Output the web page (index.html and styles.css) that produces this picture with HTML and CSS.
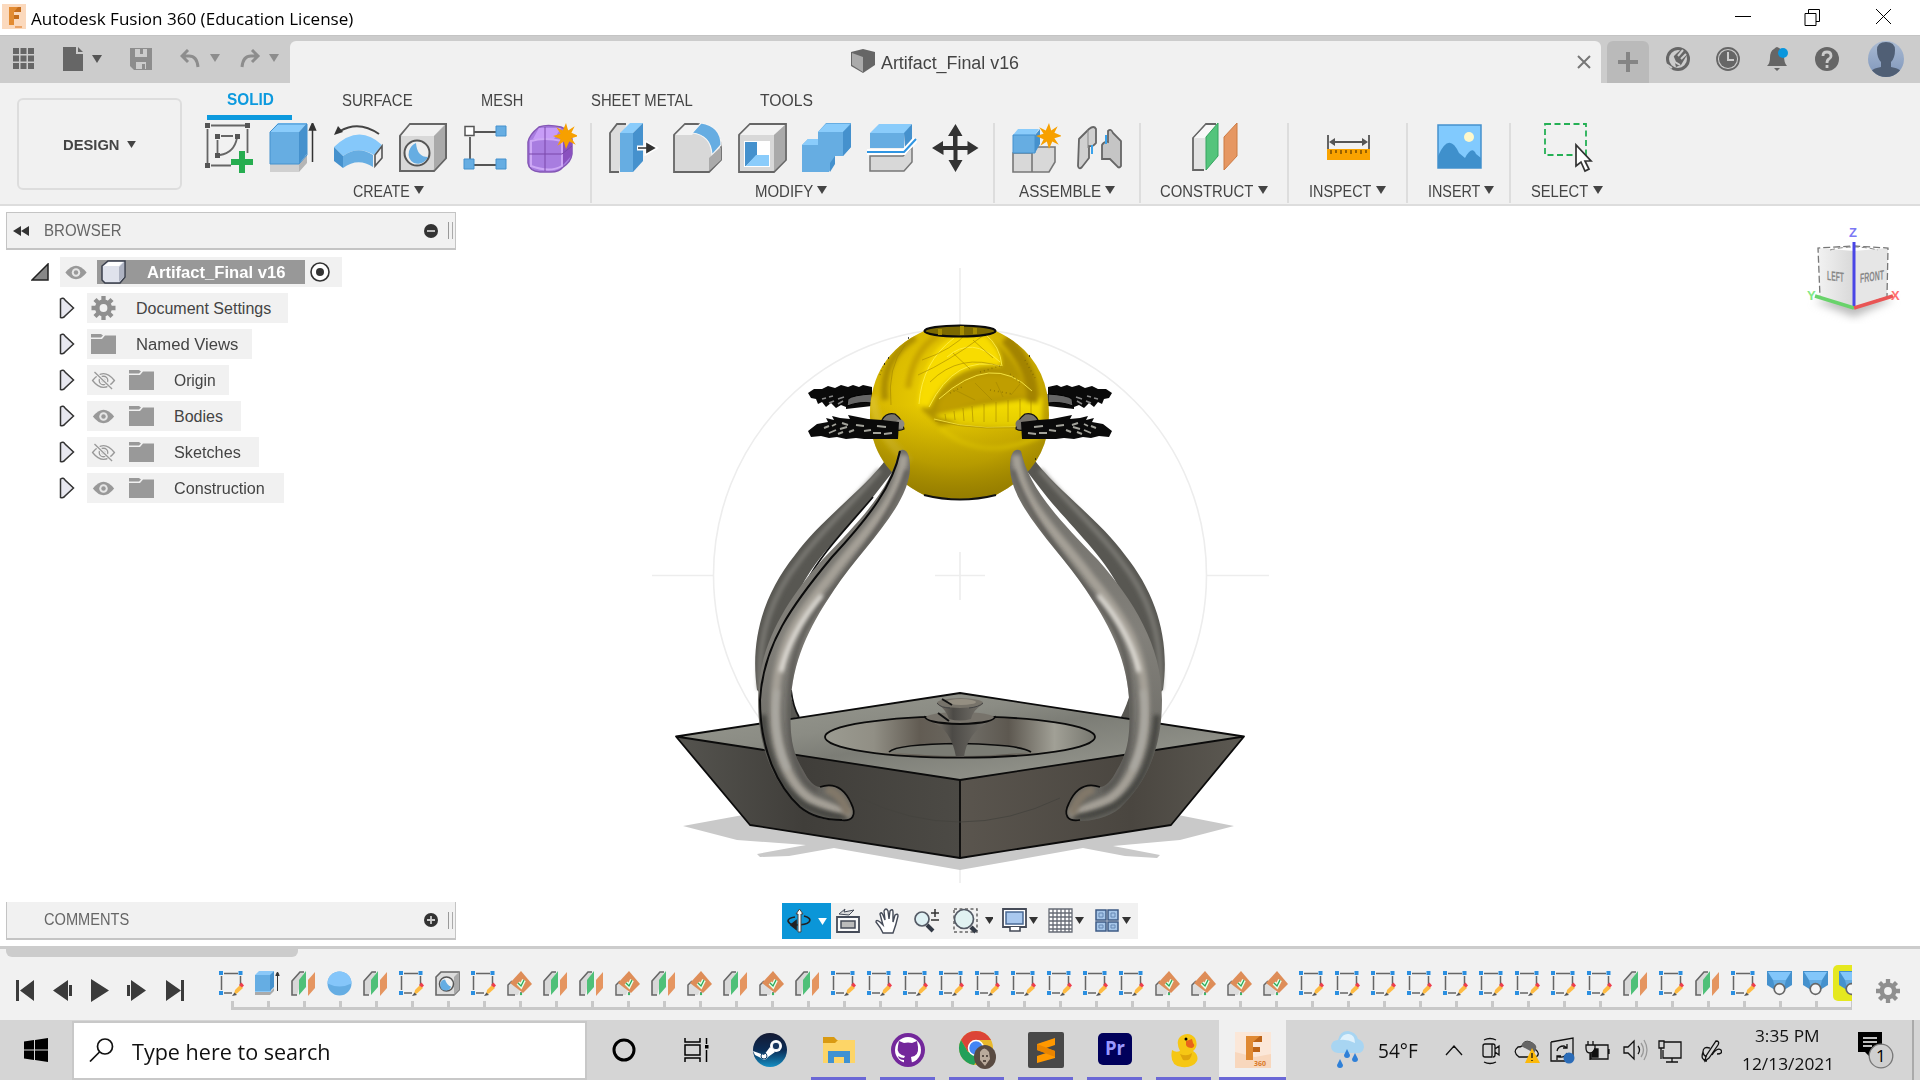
FILE: index.html
```html
<!DOCTYPE html>
<html lang="en">
<head>
<meta charset="utf-8">
<title>Autodesk Fusion 360 (Education License)</title>
<link rel="stylesheet" href="styles.css">
</head>
<body>
<svg class="defs" width="0" height="0">
  <symbol id="sketch" viewBox="0 0 25 25"><path d="M5 2.500h14M2.500 5v14M21.500 5v10M5 22h8" stroke="#666" stroke-width="1.500" fill="none"/><path d="M0 0h4v4H0zM19.500 0h4v4h-4zM0 20h4v4H0z" fill="#2b8fe0"/><path d="M15 24l1-5 5-5 3 3-5.500 5z" fill="#fdbb43"/><path d="M20 14l2.500-2.500 2.500 3-2 2z" fill="#ee3e4d"/><path d="M13 25l2.500-3.500L18 24z" fill="#555"/></symbol>
  <symbol id="extrude" viewBox="0 0 25 25"><path d="M0 21h15l4-4v3l-4 4H0z" fill="#aaa"/><path d="M0 4l4-4h15l-3 4v17H0z" fill="#8ac8f8"/><path d="M0 4h15v16H0z" fill="#65ade3"/><path d="M15 4l4-4v16l-4 4z" fill="#4591cd"/><path d="M22.500 20V3M20.800 4.500L22.500 1l1.700 3.500z" stroke="#333" fill="#333"/></symbol>
  <symbol id="plane" viewBox="0 0 25 25"><path d="M6 24H1V10L9 1h4" fill="#d8d8d8" stroke="#666" stroke-width="1.600"/><path d="M8 9l7-9v16l-7 8z" fill="#4fc078"/><path d="M17 9l7-8v16l-7 8z" fill="#e59560"/></symbol>
  <symbol id="ball" viewBox="0 0 25 25"><circle cx="12.500" cy="12.500" r="12" fill="#65ade3"/><path d="M.5 12.500a12 12 0 0 1 24 0q-12 6-24 0z" fill="#85c6fa"/></symbol>
  <symbol id="hole" viewBox="0 0 25 25"><path d="M1 6l5-5h18v18l-5 5H1z" fill="#ddd" stroke="#666" stroke-width="1.600"/><path d="M19 6l5-5v18l-5 5z" fill="#aaa"/><circle cx="11.500" cy="13" r="7" fill="#f2f2f2" stroke="#555" stroke-width="1.500"/><path d="M10 8.500q2 6 6 7A5.500 5.500 0 1 1 10 8.500z" fill="#65ade3"/></symbol>
  <symbol id="offset" viewBox="0 0 25 25"><path d="M2 24V13l5-4 6 10-2 5z" fill="#ddd"/><path d="M8 24H1V14l4-4M14 24v-3" fill="none" stroke="#666" stroke-width="1.500"/><path d="M14 0l11 13-9 9L3 12z" fill="#de8d58"/><path d="M11 12l3 3 3-6" fill="none" stroke="#e8ffe8" stroke-width="4"/><path d="M11 12l3 3 3-6" fill="none" stroke="#2aa85a" stroke-width="1.300"/><circle cx="14" cy="23" r="1.200" fill="#3dba67"/></symbol>
  <symbol id="sweep" viewBox="0 0 25 25"><path d="M0 0h25v14l-8 5H8l-8-5z" fill="#4591cd"/><path d="M1 1h23l-5 8H6z" fill="#82c6fa"/><path d="M6 9h13l-2 8H8z" fill="#65ade3"/><circle cx="12.500" cy="18" r="5.300" fill="#f5f5f5" stroke="#666" stroke-width="1.700"/></symbol>
  <symbol id="gear" viewBox="-12 -12 24 24"><circle r="6.200" fill="none" stroke="#8f8f8f" stroke-width="4.600"/><path d="M0-12V-7M0 12V7M-12 0H-7M12 0H7M-8.500-8.500l4 4M8.500 8.500l-4-4M-8.500 8.500l4-4M8.500-8.500l-4 4" stroke="#8f8f8f" stroke-width="4.300"/></symbol>
  <symbol id="eye" viewBox="0 0 25 20"><path d="M0 10Q12.500-6 25 10 12.500 26 0 10z" fill="#999"/><circle cx="12.500" cy="10" r="5" fill="#e6e6e6"/><circle cx="12.500" cy="10" r="2.600" fill="#999"/></symbol>
  <symbol id="eyeoff" viewBox="0 0 25 20"><path d="M1 10Q12.500-4.500 24 10 12.500 24.500 1 10zM8 10a4.500 4.500 0 1 0 9 0a4.500 4.500 0 1 0-9 0M11 10a1.500 1.500 0 1 0 3 0a1.500 1.500 0 1 0-3 0" fill="none" stroke="#999" stroke-width="1.400"/><path d="M3 1l19 18" stroke="#f1f1f1" stroke-width="3.500"/><path d="M3 1l18.500 18" stroke="#999" stroke-width="1.400"/></symbol>
  <symbol id="folder" viewBox="0 0 25 20"><path d="M0 0h10l2 1.500-2 2H0zM0 5h11l3-3.500h11V20H0z" fill="#999"/></symbol>
  <symbol id="arrow" viewBox="0 0 16 22"><path d="M1.500 2q3-2 4.500 1l8.500 8L6 19q-1.500 2.500-4.500 1.500z" fill="#e8e8f0" stroke="#333" stroke-width="1.500"/></symbol>
  <symbol id="star" viewBox="-12 -12 24 24"><path d="M0-12l2 7 6-4-3 6 7 3-7 2 4 6-6-3-3 7-2-7-6 4 3-6-7-3 7-2-4-6 6 3z" fill="#f7a000"/></symbol>
  <symbol id="down" viewBox="0 0 10 8"><path d="M0 0h10L5 8z" fill="currentColor"/></symbol>
</svg>

<header class="titlebar">
  <svg class="app-mark" width="24" height="25" viewBox="0 0 24 25"><path d="M0 0h24v25H0z" fill="#fbd9bd"/><path d="M7 3h12v5h-7v3h5v4h-5v6H7z" fill="#c56d1c"/><path d="M7 3h9l-4 5v13H7z" fill="#e28b32"/><path d="M13 22h7v2h-7z" fill="#eaa468"/></svg>
  <span class="title" data-w="322">Autodesk Fusion 360 (Education License)</span>
  <svg class="winctl" width="162" height="20" viewBox="0 0 162 20" fill="none" stroke="#000"><path d="M0 8.500h16M70 5.500h11v12H70zM73.500 5V1.500h11v12H81M141 1l15 15M156 1l-15 15"/></svg>
</header>

<nav class="tabbar">
  <div class="quick">
    <svg width="22" height="22" viewBox="0 0 22 22"><path d="M0 0h6v6H0zM7.500 0h6v6h-6zM15 0h6v6h-6zM0 7.500h6v6H0zM7.500 7.500h6v6h-6zM15 7.500h6v6h-6zM0 15h6v6H0zM7.500 15h6v6h-6zM15 15h6v6h-6z" fill="#666"/></svg>
    <svg class="q-file" width="40" height="25" viewBox="0 0 40 25"><path d="M0 0h13v7h7v17H0zM15 0l5 5h-5z" fill="#666"/><path d="M29 8h10l-5 8z" fill="#555"/></svg>
    <svg class="q-save" width="22" height="22" viewBox="0 0 22 22"><path d="M0 0h22v22H4l-4-4z" fill="#8d8d8d"/><path d="M5 1h12v8H5zM6 14h10v7H6z" fill="#ccc"/><path d="M10 1h3v5h-3zM12 16h3v5h-3z" fill="#8d8d8d"/></svg>
    <svg class="q-undo" width="40" height="20" viewBox="0 0 40 20"><path d="M8 1L2 7l6 6M2 7h7q8 0 9 11" fill="none" stroke="#8d8d8d" stroke-width="3"/><path d="M30 5h10l-5 8z" fill="#8d8d8d"/></svg>
    <svg class="q-redo" width="40" height="20" viewBox="0 0 40 20"><path d="M12 1l6 6-6 6M18 7h-7Q3 7 2 18" fill="none" stroke="#8d8d8d" stroke-width="3"/><path d="M29 5h10l-5 8z" fill="#8d8d8d"/></svg>
  </div>
  <div class="doctab">
    <svg width="24" height="24" viewBox="0 0 24 24"><path d="M0 3L12 0l12 3v13l-12 8L0 17z" fill="#666"/><path d="M1 4l11 4v15L1 16z" fill="#aaa"/></svg>
    <span data-w="138">Artifact_Final v16</span>
    <svg class="close" width="14" height="14" viewBox="0 0 14 14"><path d="M1 1l12 12M13 1L1 13" stroke="#777" stroke-width="2"/></svg>
  </div>
  <div class="newtab"><svg width="20" height="20" viewBox="0 0 20 20"><path d="M8 0h4v8h8v4h-8v8H8v-8H0V8h8z" fill="#858585"/></svg></div>
  <div class="status">
    <svg width="24" height="24" viewBox="0 0 24 24"><circle cx="12" cy="12" r="10.500" fill="none" stroke="#666" stroke-width="3"/><path d="M9 16l-2-6 4-4 5-4 2 2 3 4-3 5-3 5-5 2z" fill="#666"/><path d="M12 9l5-6M15 12l5-5M6 8l3 7 5 3" stroke="#ccc" stroke-width="2" fill="none"/><path d="M0 17l6 4" stroke="#ccc" stroke-width="2"/></svg>
    <svg width="24" height="24" viewBox="0 0 24 24"><circle cx="12" cy="12" r="11" fill="none" stroke="#666" stroke-width="1.800"/><circle cx="12" cy="12" r="9" fill="#666"/><path d="M12 5v8h6" fill="none" stroke="#ccc" stroke-width="2"/></svg>
    <svg width="24" height="24" viewBox="0 0 24 24"><path d="M2 19q3-3 3-8 0-7 4-9 2-2 3-2 6 2 7 9 0 7 3 10zM9 21h6l-3 3z" fill="#666"/><circle cx="18" cy="6" r="5" fill="#0a96dd"/></svg>
    <svg width="24" height="24" viewBox="0 0 24 24"><circle cx="12" cy="12" r="12" fill="#666"/><path d="M8 9q0-4 4-4t4 4q0 2-2 3t-2 4M12 18v3" fill="none" stroke="#ccc" stroke-width="2.800"/></svg>
    <svg class="avatar" width="36" height="36" viewBox="0 0 36 36"><defs><linearGradient id="av" x2="0" y2="1"><stop stop-color="#a9bad2"/><stop offset="1" stop-color="#7f96bb"/></linearGradient><clipPath id="avc"><circle cx="18" cy="18" r="18"/></clipPath></defs><circle cx="18" cy="18" r="18" fill="url(#av)"/><path clip-path="url(#avc)" d="M9 9q0-8 9-8t9 8q0 8-4 12v5q7 1 10 4v6H3v-6q3-3 10-4v-5Q9 17 9 9z" fill="#505f75"/></svg>
  </div>
</nav>

<section class="ribbon">
  <button class="design"><span data-w="57">DESIGN</span><svg width="9" height="7"><use href="#down"/></svg></button>
  <div class="tools">
    <div class="modes">
      <span class="mode on"><b data-w="47">SOLID</b></span><span class="mode m2" data-w="71">SURFACE</span><span class="mode m3" data-w="42">MESH</span><span class="mode m4" data-w="102">SHEET METAL</span><span class="mode m5" data-w="53">TOOLS</span>
    </div>
    <div class="groups">
      <div class="group g-create">
        <div class="icons">
          <svg viewBox="0 0 50 50"><path d="M6 2.500h34M2.500 6v34M42.500 6v24M6 42.500h20M16 13h12M12.500 17v14M32 15q-3 15-17 17" fill="none" stroke="#666" stroke-width="1.800"/><path d="M0 0h5v5H0zM40 0h5v5h-5zM0 40h5v5H0zM10 11h5v5h-5zM30 11h5v5h-5zM10 30h5v5h-5z" fill="#555"/><path d="M34 28h6v8h8v6h-8v8h-6v-8h-8v-6h8z" fill="#26ad50"/></svg>
          <svg viewBox="0 0 50 50"><path d="M1 41h29l8-9v8l-8 9H1z" fill="#b5b5b5"/><path d="M1 41h29v8H1z" fill="#d0d0d0"/><path d="M1 9l8-9h29l-8 9z" fill="#8accfb"/><path d="M1 9h29v32H1z" fill="#66ade2"/><path d="M30 9l8-9v31l-8 10z" fill="#4591cd"/><path d="M1 9v32h29l8-9V1H9z" fill="none" stroke="#4591cd"/><path d="M43.500 39V5M40.500 7L43.500 0l3 7z" fill="#333" stroke="#333" stroke-width="1.500"/></svg>
          <svg viewBox="0 0 50 50"><path d="M6 8Q25-3 45 11" fill="none" stroke="#444" stroke-width="2"/><path d="M0 12l4-9 5 6z" fill="#333"/><path d="M0 24Q25 0 48 22l-8 10Q24 22 9 33z" fill="#85c8fa"/><path d="M0 24l9 9v12L0 38z" fill="#4591cd"/><path d="M9 33q15-11 30-1v12q-15-10-30 1z" fill="#66ade2"/><path d="M41 32l7-9v12l-7 8z" fill="#eee" stroke="#555" stroke-width="1.600"/></svg>
          <svg viewBox="0 0 50 50"><path d="M2 13L12 1h36v34L36 48H2z" fill="#d8d8d8" stroke="#666" stroke-width="2"/><path d="M3 13L12 2h34L36 13z" fill="#f0f0f0"/><path d="M36 13L47 2v33L36 47z" fill="#aaa"/><circle cx="19" cy="30" r="12.500" fill="#eee" stroke="#555" stroke-width="2"/><path d="M18 20q1 14 12 14-5 9-14 6-7-4-5-12 2-6 7-8z" fill="#66ade2"/></svg>
          <svg viewBox="0 0 50 50"><path d="M10 9h24M7 14v22M10 42h24" stroke="#555" stroke-width="1.800"/><path d="M2 3.500h9v9H2z" fill="#fff" stroke="#555" stroke-width="1.500"/><path d="M33 3h10v10H33zM1 36h10v10H1zM33 36h10v10H33z" fill="#66ade2" stroke="#4591cd"/></svg>
          <svg viewBox="0 0 50 50"><path d="M1 19Q2 12 12 4q8-3 22 0 10 4 11 12v15q-1 8-9 13-4 5-12 5H13Q2 48 1 40z" fill="#a87de0" stroke="#8456b5" stroke-width="1.500"/><path d="M12 5h22l-7 11H6z" fill="#c79cf7"/><path d="M35 17l10 0v15l-9 10z" fill="#8a51bf"/><path d="M4 18q13-4 31 0v25q-12 7-31 0z" fill="none" stroke="#cda8f6" stroke-width="2"/><path d="M18 4v44M2 31h33l10-8" fill="none" stroke="#7a48aa" stroke-width="1"/><use href="#star" x="26" y="-1" width="26" height="28"/></svg>
        </div>
        <div class="glabel"><span data-w="57">CREATE</span><svg width="10" height="8"><use href="#down"/></svg></div>
      </div>
      <div class="group g-modify">
        <div class="icons">
          <svg viewBox="0 0 50 50"><path d="M10 49H1V10L8 1h9" fill="#ddd" stroke="#666" stroke-width="1.800"/><path d="M11 10l10-10h13L24 10z" fill="#8accfb"/><path d="M11 10h13v39H11z" fill="#66ade2"/><path d="M24 10L34 0v38L24 49z" fill="#4591cd"/><path d="M28 25h13M38 21l7 4-7 4z" stroke="#fff" stroke-width="5"/><path d="M29 25h12M38 21l7 4-7 4z" fill="#333" stroke="#333" stroke-width="1.700"/></svg>
          <svg viewBox="0 0 50 50"><path d="M1 12L12 1h12Q47 2 48 25v12L36 49H1z" fill="#d8d8d8" stroke="#666" stroke-width="1.800"/><path d="M2 12L12 2h16L19 12z" fill="#f3f3f3"/><path d="M19 10L28 0q20 3 20 22l-9 10Q38 12 19 10z" fill="#66ade2" stroke="#f5f5f5" stroke-width="1.200"/><path d="M36 35l12-11v13L36 48z" fill="#aaa"/></svg>
          <svg viewBox="0 0 50 50"><path d="M1 12L12 1h36v36L36 49H1z" fill="#d8d8d8" stroke="#666" stroke-width="1.800"/><path d="M2 12L12 2h35L36 12z" fill="#f2f2f2"/><path d="M36 12L47 2v35L36 48z" fill="#aaa"/><path d="M6 18h26v26H6z" fill="#fff"/><path d="M7 19h12v13L8 43H7z" fill="#4591cd"/><path d="M18 32h13v11H8z" fill="#8accfb"/></svg>
          <svg viewBox="0 0 50 50"><path d="M0 22l6-6h10V9l8-9h25v24l-8 9h-8v7l-6 9H0z" fill="#66ade2"/><path d="M16 9l8-8h24l-7 8zM0 22l6-6h10v6z" fill="#8accfb"/><path d="M41 9l8-8v23l-8 9zM28 40l5-7v8l-5 8z" fill="#4591cd"/></svg>
          <svg viewBox="0 0 50 50"><path d="M3 10L12 1h33l-7 9z" fill="#8accfb"/><path d="M3 10h34v15H3z" fill="#66ade2"/><path d="M37 10l8-9v15l-7 9z" fill="#4591cd"/><path d="M3 33h33l9-9v15l-8 9H3z" fill="#d8d8d8" stroke="#777" stroke-width="1.500"/><path d="M0 29h37L49 16" stroke="#fff" stroke-width="6" fill="none"/><path d="M0 29h37L49 16" stroke="#2f95e2" stroke-width="2" fill="none"/></svg>
          <svg viewBox="0 0 50 50"><path d="M24.500 1l7 12h-5v10h10v-5l11 7-11 7v-5h-10v10h5l-7 12-7-12h5V27h-10v5L1 25l11-7v5h10V13h-5z" fill="#333"/></svg>
        </div>
        <div class="glabel"><span data-w="58">MODIFY</span><svg width="10" height="8"><use href="#down"/></svg></div>
      </div>
      <div class="group g-assemble">
        <div class="icons">
          <svg viewBox="0 0 50 50"><path d="M2 30h19v19H2zM21 30l5-6h18v15l-6 10H21z" fill="#d8d8d8" stroke="#777" stroke-width="1.600"/><path d="M2 12l5-6h21l-4 6z" fill="#8accfb"/><path d="M2 12h22v18H2z" fill="#66ade2" stroke="#4591cd"/><path d="M24 12l5-6v15l-5 9z" fill="#4591cd"/><use href="#star" x="25" y="0" width="26" height="26"/></svg>
          <svg viewBox="0 0 50 50"><path d="M4 16L14 6q5-4 7 0v14q-3 4-7 3v12L7 44q-3 3-4-1z" fill="#d0d0d0" stroke="#666" stroke-width="1.800"/><path d="M13 7v18M41 15v22" stroke="#888"/><path d="M33 17V8q3-3 5 2l8 8v25q-2 3-4 0l-7-7h-8V22q2-4 6-3z" fill="#c5c5c5" stroke="#666" stroke-width="1.800"/><path d="M17 22v9M31 12v9" stroke="#3aa3ec" stroke-width="2"/></svg>
        </div>
        <div class="glabel"><span data-w="82">ASSEMBLE</span><svg width="10" height="8"><use href="#down"/></svg></div>
      </div>
      <div class="group g-construct">
        <div class="icons"><svg viewBox="0 0 50 50"><path d="M14 47H3V15L16 1h10" fill="#e3e3e3" stroke="#666" stroke-width="1.800"/><path d="M4 15L16 2h10L15 15z" fill="#f8f8f8"/><path d="M16 14L28 0v33L16 47z" fill="#54c47c" stroke="#35a45e"/><path d="M34 14L47 0v33L34 47z" fill="#e69762" stroke="#cc7a43"/></svg></div>
        <div class="glabel"><span data-w="93">CONSTRUCT</span><svg width="10" height="8"><use href="#down"/></svg></div>
      </div>
      <div class="group g-inspect">
        <div class="icons"><svg viewBox="0 0 50 50"><path d="M4 12v14M45 12v14M8 19h34" stroke="#555" stroke-width="1.800"/><path d="M5 19l6-4v8zM44 19l-6-4v8z" fill="#555"/><path d="M3 26h43v11H3z" fill="#f9a300"/><path d="M7 27v4M12 27v3M17 27v4M22 27v3M27 27v4M32 27v3M37 27v4M42 27v3" stroke="#7a4e00" stroke-width="1.500"/></svg></div>
        <div class="glabel"><span data-w="62">INSPECT</span><svg width="10" height="8"><use href="#down"/></svg></div>
      </div>
      <div class="group g-insert">
        <div class="icons"><svg viewBox="0 0 50 50"><path d="M3 2h43v43H3z" fill="#81cafe" stroke="#4591cd" stroke-width="1.500"/><circle cx="34" cy="14" r="5" fill="#fdf8cb"/><path d="M3 33q11-25 21-3l6 5q7-13 11-4l5 4v10H3z" fill="#3f90cc"/></svg></div>
        <div class="glabel"><span data-w="52">INSERT</span><svg width="10" height="8"><use href="#down"/></svg></div>
      </div>
      <div class="group g-select">
        <div class="icons"><svg viewBox="0 0 50 50"><path d="M1 1h41v31H1z" fill="none" stroke="#25b055" stroke-width="1.800" stroke-dasharray="6 3.500"/><path d="M32 22v21l5-4 4 9 4-2-4-8h6z" fill="#fff" stroke="#333" stroke-width="1.700"/></svg></div>
        <div class="glabel"><span data-w="57">SELECT</span><svg width="10" height="8"><use href="#down"/></svg></div>
      </div>
    </div>
  </div>
</section>

<main class="viewport">
  <svg class="scene" width="1920" height="740" viewBox="0 206 1920 740">
    <defs>
      <radialGradient id="gold" cx=".47" cy=".4" r=".62"><stop stop-color="#f3d700"/><stop offset=".6" stop-color="#d8b800"/><stop offset=".9" stop-color="#a98d00"/><stop offset="1" stop-color="#857008"/></radialGradient>
      <linearGradient id="goldlow" x2="0" y2="1"><stop offset=".45" stop-color="#a08800" stop-opacity="0"/><stop offset="1" stop-color="#8d7600" stop-opacity=".9"/></linearGradient>
      <linearGradient id="topface" x1="0" x2="1" y2="1"><stop stop-color="#9a9b92"/><stop offset=".35" stop-color="#8b8c84"/><stop offset=".5" stop-color="#7c7d76"/><stop offset="1" stop-color="#a0a198"/></linearGradient>
      <linearGradient id="lface"><stop stop-color="#55544f"/><stop offset=".45" stop-color="#403e3a"/><stop offset="1" stop-color="#4c4a45"/></linearGradient>
      <linearGradient id="rface"><stop stop-color="#5a554e"/><stop offset=".6" stop-color="#4a4640"/><stop offset="1" stop-color="#5c5952"/></linearGradient>
      <linearGradient id="pool"><stop stop-color="#9b9b91"/><stop offset=".18" stop-color="#918f85"/><stop offset=".35" stop-color="#625c53"/><stop offset=".55" stop-color="#6d6a63"/><stop offset=".68" stop-color="#5d5850"/><stop offset=".85" stop-color="#a1a096"/><stop offset="1" stop-color="#77776f"/></linearGradient>
      <linearGradient id="cup"><stop stop-color="#807a70"/><stop offset=".35" stop-color="#4c4a46"/><stop offset="1" stop-color="#77746d"/></linearGradient>
      <linearGradient id="cube"><stop stop-color="#f2f2f2"/><stop offset="1" stop-color="#d8d8d8"/></linearGradient>
      <linearGradient id="legg" x2="0" y2="1"><stop stop-color="#6f6d68"/><stop offset=".5" stop-color="#82807a"/><stop offset="1" stop-color="#62615c"/></linearGradient>
      <filter id="b2" x="-30%" y="-30%" width="160%" height="160%"><feGaussianBlur stdDeviation="2"/></filter>
      <filter id="b4" x="-30%" y="-30%" width="160%" height="160%"><feGaussianBlur stdDeviation="4"/></filter>
      <clipPath id="ballclip"><path d="M924 331Q870 356 870 415 870 468 924 495q36 8 72 0 53-27 53-80 0-59-53-84-36-11-72 0z"/></clipPath>
      <path id="frontleg" d="M899 451C892 485 866 515 822 560 787 600 758 645 758 700 758 752 776 785 800 808 812 818 828 821 842 821 853 822 856 812 851 803 845 790 835 782 820 787 814 787 808 780 803 770 789 748 790 725 791 698 794 654 814 620 834 590 860 550 909 507 910 468 910 450 904 448 899 451z"/>
      <clipPath id="legclip"><use href="#frontleg"/></clipPath>
      <g id="backleg"><path d="M887 458C866 488 820 520 795 555 763 595 750 640 757 690L790 719 799 717C785 690 775 640 800 590 813 560 850 525 873 497L894 470z" fill="#585752"/><path d="M880 470C855 500 822 530 800 560 772 595 757 635 760 690" fill="none" stroke="#807f79" stroke-width="4" filter="url(#b2)"/></g>
      <g id="leg"><use href="#frontleg" fill="url(#legg)"/><g clip-path="url(#legclip)" fill="none"><path d="M904 455C900 505 860 535 828 580 790 625 775 655 775 710 775 760 795 790 812 800L850 815" stroke="#a5a097" stroke-width="9" filter="url(#b2)"/><path d="M907 470C892 515 862 550 834 588 802 625 790 655 790 700 788 750 800 785 818 790" stroke="#4e4c48" stroke-width="3" filter="url(#b2)"/><path d="M822 595C800 620 786 648 781 672" stroke="#efece6" stroke-width="4" filter="url(#b2)"/><path d="M763 715q4 65 42 91 20 10 42 11" stroke="#45443f" stroke-width="6" filter="url(#b2)"/><path d="M777 690Q771 735 788 770" stroke="#aaa9a3" stroke-width="5" filter="url(#b2)"/><path d="M826 789q17 5 22 26" stroke="#827869" stroke-width="9" filter="url(#b2)"/></g><path d="M820 787C835 782 845 790 851 803 857 815 853 822 840 820" fill="none" stroke="#0a0a0a" stroke-width="1.700"/></g>
      <g id="wingback"><path d="M872 387l-9-2-4 2-6-2-5 2-7-2-6 3-7-2-6 3-8 0-6 4 3 5 5 1 2 5 4-2 4 5 5-4 5 5 5-3 5 2v2l26-3z" fill="#0a0a0a"/><path d="M872 394q-19 1-24 5l-1 7q13-5 25-3z" fill="#666" stroke="#000"/><path d="M822 399l4-1M829 397l4-1M829 403l5-2M838 399l6-2M838 404l5-3" stroke="#888" stroke-width="1.500"/></g>
      <g id="wingfront"><path d="M899 422l-17-2-14-1-20-4 2 4-10-1-8-2 2 4-8-2 2 4-11 2-9 7 3 6 10-1 8 2 8-1 9 2 10-1 8 1 13 0 21 0z" fill="#0a0a0a"/><path d="M824 428l5-2M832 426l4-2M829 433l7-3M840 429l7-2M842 423l6 2M838 434l5-2M849 432l5-2M856 425l8 1M864 431l7-1M877 426l9 1M873 433l8 0M884 434l8-1" stroke="#a3a39b" stroke-width="1.900"/></g>
    </defs>
    <g fill="none" stroke="#ededed" stroke-width="1.600"><circle cx="960" cy="575" r="246.500"/><path d="M960 268v61M960 822v61M652 575.500h61M1207 575.500h62M935 575.500h50M960 552v48"/></g>
    <path d="M683 826l60-11L960 840l218-25 56 11-54 14-67 6 47 9-3 3-32-2-42-8-123 22-126-22-45 8-29 1-3-3 49-9-69-5z" fill="#c9c9c9"/>
    <use href="#backleg"/><use href="#backleg" transform="matrix(-1 0 0 1 1920 0)"/>
    <path d="M873 497C845 530 820 555 806 583M791 690q2 17 8 27" fill="none" stroke="#111" stroke-width="1.800"/>
    <path d="M676 736.500L960 693l284 43.500L960 780z" fill="url(#topface)"/>
    <path d="M676 736.500L960 780v78L750 825z" fill="url(#lface)"/>
    <path d="M1244 736.500L960 780v78l211-33z" fill="url(#rface)"/>
    <path d="M676 736.500L960 693l284 43.500L960 780zM676 736.500L750 825l210 33 211-33 73-88.500M960 780v78" fill="none" stroke="#0b0b0b" stroke-width="1.800" stroke-linejoin="round"/>
    <path d="M860 798q100 48 200 0" fill="none" stroke="#44423d" stroke-width=".8"/>
    <ellipse cx="960" cy="737" rx="135" ry="20.700" fill="url(#pool)" stroke="#0b0b0b" stroke-width="1.800"/>
    <path d="M889 752q8-8 71-8.500 60 1 71 8.500-70 8-142 0z" fill="#7b7c74"/><path d="M889 752q8-8 71-8.500 60 1 71 8.500" fill="none" stroke="#0b0b0b" stroke-width="1.700"/>
    <path d="M932 722q19 7 24 35h8q3-24 26-36z" fill="url(#cup)"/>
    <ellipse cx="960" cy="718" rx="35" ry="6" fill="#77736b"/><path d="M925 716q-1 7 35 8 36-1 35-8" fill="none" stroke="#0b0b0b" stroke-width="1.800"/>
    <path d="M937 704q9 5 12 15 11 3 22 0 2-9 12-15z" fill="url(#cup)"/><path d="M938 713l11 8" stroke="#111" stroke-width="2"/>
    <ellipse cx="960" cy="703" rx="23" ry="5" fill="#77736a"/><ellipse cx="961" cy="702" rx="15" ry="3" fill="#958f82"/><path d="M942 699l10 6" stroke="#111" stroke-width="2"/><path d="M937 703q4 5 13 5M969 708q10-1 14-5" stroke="#444" fill="none"/>
    <use href="#wingback"/><use href="#wingback" transform="matrix(-1 0 0 1 1920 0)"/>
    <g clip-path="url(#ballclip)">
      <path d="M860 320h200v190H860z" fill="url(#gold)"/>
      <g filter="url(#b2)">
        <path d="M922 410Q925 345 970 331q50 15 60 75l-90 20z" fill="#b39400"/>
        <path d="M918 405Q922 350 955 336h30q18 14 16 30-50-5-72 42z" fill="#f8dc06"/>
        <path d="M940 400q35-42 95-15l5 12q-60-3-104 22z" fill="#c09e00"/>
        <path d="M934 416q40-11 108-18v26q-52 8-108-8z" fill="#f2da00"/>
        <path d="M885 400q-5-40 30-63" stroke="#ac8d06" stroke-width="7" fill="none"/>
        <path d="M872 396q4 38 38 66" stroke="#dbc020" stroke-width="9" fill="none"/>
        <path d="M1006 338q30 35 26 65" stroke="#a38300" stroke-width="12" fill="none"/>
        <path d="M908 388q4-36 30-53" stroke="#c5a200" stroke-width="6" fill="none"/>
        <path d="M940 428q42 36 100 8" stroke="#f3d700" stroke-width="4" fill="none"/>
      </g>
      <path d="M934 419q50 15 108 4M919 404q3-42 35-66M929 407Q955 354 1001 366M947 357q25-22 53 5M985 334q15 12 17 32M939 399q53-48 93-8" stroke="#fff04b" stroke-width="1" fill="none" opacity=".85"/>
      <path d="M935 421q50 12 108 4M922 360q30-10 46-28M918 375q30-13 66-40M930 382q30-30 72-15M905 345q-18 22-14 60M945 414l1 6M954 411l1 9M963 408l1 13M972 406l1 16M984 404v18M996 402v20M1008 400v22M1020 399v22M1031 397v23M955 390l20 10M975 383l17 17M996 382l7 15M1020 384l-9 11M953 353l17 16M973 340l20 18" stroke="#a38600" stroke-width="1" fill="none" opacity=".6"/>
      <path d="M980 372l20-6M1010 374l12 10M880 375l7-20M892 350l12-12M1025 360l10 18M950 393l12-6M990 390l22 4" stroke="#6c5800" stroke-width="1.500" stroke-dasharray="1 3" fill="none" opacity=".5"/>
      <path d="M860 320h200v190H860z" fill="url(#goldlow)"/>
    </g>
    <ellipse cx="960" cy="331" rx="35.500" ry="5.500" fill="#7c6900" stroke="#0b0b0b" stroke-width="2.200"/><path d="M940 329v6M962 326v9M975 328v6" stroke="#a68d00" stroke-width="4"/>
    <path d="M924 495q36 9 72 0" fill="none" stroke="#111" stroke-width="2"/>
    <path d="M908 338h1M888 358h1M884 364h1M1029 356h1M1035 459h1" stroke="#111" stroke-width="1.500"/>
    <g><path d="M882 420q4-8 13-6 8 6 9 15-6 3-12-1z" fill="#77746c" stroke="#111" stroke-width="1.200"/><circle cx="900" cy="424" r="4.500" fill="#8d8a83"/><use href="#wingfront"/></g>
    <g transform="matrix(-1 0 0 1 1920 0)"><path d="M882 420q4-8 13-6 8 6 9 15-6 3-12-1z" fill="#77746c" stroke="#111" stroke-width="1.200"/><circle cx="900" cy="424" r="4.500" fill="#75726c"/><use href="#wingfront"/></g>
    <use href="#leg"/><use href="#leg" transform="matrix(-1 0 0 1 1920 0)"/>
    <path d="M900 451C893 485 871 515 832 557 792 605 763 645 760 700 760 752 779 788 800 807 812 817 828 820 842 820" fill="none" stroke="#0b0b0b" stroke-width="2"/>
    <g class="viewcube">
      <path d="M1814 301l40 16 40-18-40-3z" fill="#bbb" filter="url(#b4)"/>
      <path d="M1818 248l36 3v57l-34-11z" fill="url(#cube)"/><path d="M1888 248l-34 3v57l33-11z" fill="#e6e6e6"/>
      <path d="M1854 308l-34-11-2-49 36-2 34 2-1 49-33 11" fill="none" stroke="#777" stroke-width="1.300" stroke-dasharray="7 3"/>
      <path d="M1830 250q24-6 48 0" fill="none" stroke="#888" stroke-dasharray="5 3"/>
      <path d="M1854 242v66" stroke="#4a46e6" stroke-width="3"/><path d="M1854 308l-39-12" stroke="#69d36b" stroke-width="3.500"/><path d="M1854 308l39-12" stroke="#e95555" stroke-width="3.500"/>
      <text class="axis" x="1849" y="237" fill="#7b78f5">Z</text><text class="axis" x="1807" y="300" fill="#83e985">Y</text><text class="axis" x="1891" y="300" fill="#ff7070">X</text>
      <text class="face" transform="matrix(1 .12 0 1.500 1827 280)" textLength="17" lengthAdjust="spacingAndGlyphs">LEFT</text><text class="face" transform="matrix(1 -.15 0 1.500 1860 283)" textLength="24" lengthAdjust="spacingAndGlyphs">FRONT</text>
    </g>
  </svg>
  <div class="panels">
    <aside class="browser">
      <div class="panel-head"><svg class="rew" width="16" height="10" viewBox="0 0 16 10"><path d="M0 5l8-5v10zM8 5l8-5v10z" fill="#333"/></svg><span data-w="78">BROWSER</span><svg class="dot" width="14" height="14" viewBox="0 0 14 14"><circle cx="7" cy="7" r="7" fill="#333"/><path d="M3 7h8" stroke="#ccc" stroke-width="1.800"/></svg><i class="grip"></i></div>
      <div class="tree">
        <div class="row root"><svg class="tri" width="18" height="18" viewBox="0 0 18 18"><path d="M1 17L17 1v16z" fill="#888" stroke="#222" stroke-width="1.500"/></svg>
          <div class="cell"><svg width="24" height="17"><use href="#eye"/></svg><div class="sel"><svg width="25" height="24" viewBox="0 0 25 24"><path d="M1 6l6-5h17v16l-5 6H4l-3-3z" fill="#dfe2ec" stroke="#3a3f4c" stroke-width="1.500"/><path d="M3 6l5-4h14l-4 4z" fill="#fff"/><path d="M18 7l5-5v15l-5 5z" fill="#aeb3c2"/></svg><b data-w="138">Artifact_Final v16</b></div><svg width="20" height="20" viewBox="0 0 20 20"><circle cx="10" cy="10" r="9" fill="#fff" stroke="#333" stroke-width="1.600"/><circle cx="10" cy="10" r="4" fill="#333"/></svg></div></div>
        <div class="row"><svg class="exp" width="16" height="22"><use href="#arrow"/></svg><div class="cell w1"><svg width="25" height="24"><use href="#gear"/></svg><span data-w="135">Document Settings</span></div></div>
        <div class="row"><svg class="exp" width="16" height="22"><use href="#arrow"/></svg><div class="cell w2"><svg width="25" height="20"><use href="#folder"/></svg><span data-w="102">Named Views</span></div></div>
        <div class="row"><svg class="exp" width="16" height="22"><use href="#arrow"/></svg><div class="cell w3"><svg width="25" height="19"><use href="#eyeoff"/></svg><svg class="f2" width="25" height="20"><use href="#folder"/></svg><span data-w="42">Origin</span></div></div>
        <div class="row"><svg class="exp" width="16" height="22"><use href="#arrow"/></svg><div class="cell w4"><svg width="25" height="17"><use href="#eye"/></svg><svg class="f2" width="25" height="20"><use href="#folder"/></svg><span data-w="49">Bodies</span></div></div>
        <div class="row"><svg class="exp" width="16" height="22"><use href="#arrow"/></svg><div class="cell w5"><svg width="25" height="19"><use href="#eyeoff"/></svg><svg class="f2" width="25" height="20"><use href="#folder"/></svg><span data-w="67">Sketches</span></div></div>
        <div class="row"><svg class="exp" width="16" height="22"><use href="#arrow"/></svg><div class="cell w6"><svg width="25" height="17"><use href="#eye"/></svg><svg class="f2" width="25" height="20"><use href="#folder"/></svg><span data-w="91">Construction</span></div></div>
      </div>
    </aside>
    <div class="bottom">
      <div class="panel-head comments"><span data-w="85">COMMENTS</span><svg class="dot" width="14" height="14" viewBox="0 0 14 14"><circle cx="7" cy="7" r="7" fill="#333"/><path d="M3 7h8M7 3v8" stroke="#ccc" stroke-width="1.800"/></svg><i class="grip"></i></div>
      <div class="navbar">
        <div class="orbit"><svg width="24" height="26" viewBox="0 0 24 26" fill="none" stroke="#222" stroke-width="1.700"><path d="M17 8q8 2 5 6-3 3-13 3M8 9q-7 1-7 4 1 3 5 4"/><path d="M9 13l-5 4 5 4z" fill="#222"/><path d="M11 24V6H9l3.500-5L16 6h-2v18z" fill="#fff" stroke="#444" stroke-width="1"/></svg><svg class="dn" width="9" height="7"><use href="#down"/></svg></div>
        <svg width="24" height="26" viewBox="0 0 24 26"><path d="M1 9h22v15H1z" fill="#fafafa" stroke="#454b58" stroke-width="1.800"/><path d="M5 13h14v7H5z" fill="#bbb" stroke="#454b58" stroke-width="1.500"/><path d="M3 6l6-5-1 3 10-2-5 5z" fill="#ddd" stroke="#454b58"/></svg>
        <svg class="n2" width="25" height="26" viewBox="0 0 25 26"><path d="M8 25Q6 20 1 14q0-3 4 0l3 3L5 6q1-3 3 1l2 5-1-9q2-4 4 0l1 8 1-8q3-3 3 1v10l2-7q3-2 3 1-2 9-5 17z" fill="#fff" stroke="#454b58" stroke-width="1.400"/></svg>
        <svg class="n3" width="25" height="26" viewBox="0 0 25 26"><circle cx="8" cy="11" r="7" fill="#dff1f4" stroke="#555b66" stroke-width="1.700"/><path d="M13 17l6 6" stroke="#333a46" stroke-width="4"/><path d="M21 1v8M17 5h8M17 12h8" stroke="#333" stroke-width="1.500"/></svg>
        <svg class="n4" width="40" height="26" viewBox="0 0 40 26"><path d="M1 1h23v23H1z" fill="none" stroke="#666" stroke-width="1.500" stroke-dasharray="3 2.500"/><circle cx="11" cy="11" r="9.500" fill="#e1f2f2" stroke="#555b66" stroke-width="1.700"/><path d="M18 19l5 5" stroke="#333a46" stroke-width="4.500"/><path d="M32 9h9l-4.500 7z" fill="#333"/></svg>
        <svg class="n5" width="36" height="26" viewBox="0 0 36 26"><path d="M1 1h23v18H1z" fill="#fff" stroke="#454b58" stroke-width="1.800"/><path d="M4 4h17v12H4z" fill="#a9c8ee" stroke="#4a6995" stroke-width="1.500"/><path d="M8 19v4h10v-4" fill="#fff" stroke="#454b58" stroke-width="1.600"/><path d="M27 9h9l-4.500 7z" fill="#333"/></svg>
        <svg class="n6" width="36" height="26" viewBox="0 0 36 26"><path d="M1 1h23v23H1z" fill="#fff"/><path d="M1 1h23v23H1zM5 1v23M9 1v23M13 1v23M17 1v23M21 1v23M1 5h23M1 9h23M1 13h23M1 17h23M1 21h23" fill="none" stroke="#666b75" stroke-width="1.300"/><path d="M27 9h9l-4.500 7z" fill="#333"/></svg>
        <svg class="n7" width="36" height="26" viewBox="0 0 36 26"><path d="M1 2h10v10H1zM13 2h10v10H13zM1 14h10v9H1zM13 14h10v9H13z" fill="#a5c5e8" stroke="#3e5b85" stroke-width="1.500"/><path d="M4 5h4v4H4zM16 5h4v4h-4zM4 17h4v3H4zM16 17h4v3h-4z" fill="none" stroke="#6689b5"/><path d="M27 9h9l-4.500 7z" fill="#333"/></svg>
      </div>
    </div>
  </div>
</main>

<section class="timeline">
  <div class="thumb"></div>
  <div class="tl-body">
    <svg class="play" width="172" height="24" viewBox="0 0 172 24" fill="#3b3b3b"><path d="M0 1h3v21H0zM18 1v21L4 11.500zM52 1v21L37 11.500zM53 6h3v11h-3zM75 0l18 11.500L75 23zM111 6h3v11h-3zM115 1l15 10.500L115 22zM150 1l15 10.500L150 22zM165 1h3v21h-3z"/></svg>
    <div class="track" id="track"></div>
    <svg class="tl-gear" width="24" height="24"><use href="#gear"/></svg>
  </div>
</section>

<footer class="taskbar">
  <svg class="start" width="24" height="24" viewBox="0 0 24 24"><path d="M0 3.500L10 2v9.500H0zM11 2l13-2v11.500H11zM0 12.500h10V22L0 20.500zM11 12.500h13V24l-13-2z"/></svg>
  <div class="search"><svg width="25" height="24" viewBox="0 0 25 24" fill="none" stroke="#111" stroke-width="1.700"><circle cx="16" cy="8.500" r="7.500"/><path d="M10.500 14L1 23.500"/></svg><span data-w="198">Type here to search</span></div>
  <svg class="cortana" width="24" height="24" viewBox="0 0 24 24"><circle cx="12" cy="12" r="10" fill="none" stroke="#000" stroke-width="3"/></svg>
  <svg class="tview" width="25" height="24" viewBox="0 0 25 24" fill="none" stroke="#000" stroke-width="1.500"><path d="M1 0v4h15V0M1 7h15v10H1zM1 24v-4h15v4M22.500 0v6M22.500 12v12"/><path d="M21 7h3.500v3.500H21z" fill="#000" stroke="none"/></svg>
  <div class="apps">
    <div class="app"><svg width="36" height="36" viewBox="0 0 36 36"><defs><linearGradient id="st" x2="0" y2="1"><stop stop-color="#141a33"/><stop offset=".5" stop-color="#0b2c55"/><stop offset="1" stop-color="#148fc4"/></linearGradient></defs><circle cx="18" cy="18" r="17" fill="url(#st)"/><path d="M1 19l11 4 6-8 5 5-7 5q-3 5-7 1l-6-3z" fill="#fff"/><circle cx="24" cy="14" r="6" fill="#fff"/><circle cx="24" cy="14" r="3.800" fill="#17365f" stroke="#fff"/><circle cx="12" cy="24" r="3" fill="none" stroke="#17466f"/></svg></div>
    <div class="app run"><svg width="36" height="36" viewBox="0 0 36 36"><path d="M2 5h11l3 3h17v6H2z" fill="#d99a12"/><path d="M2 11h12l3-3h17v23H2z" fill="#fdd567"/><path d="M7 19h22v12h-6v-6h-10v6H7z" fill="#3f92d2"/></svg></div>
    <div class="app run"><svg width="36" height="36" viewBox="0 0 36 36"><circle cx="18" cy="18" r="17" fill="#73279b"/><circle cx="18" cy="18" r="13" fill="#fff"/><path d="M9 9l5 2q4-1 8 0l5-2 1 6q1 9-7 10l1 6h-8v-3q-5 0-6-4 3 2 6 2l1-2Q6 22 8 14z" fill="#73279b"/></svg></div>
    <div class="app run"><svg width="38" height="40" viewBox="0 0 38 40"><circle cx="18" cy="18" r="17" fill="#e9b92b"/><path d="M3 10a17 17 0 0 1 30 0H18l-8 12z" fill="#dc4437"/><path d="M3 10a17 17 0 0 0 13 25l7-12-13-1z" fill="#23a05a"/><circle cx="18" cy="18" r="7.500" fill="#4285f4" stroke="#fff" stroke-width="1.500"/><ellipse cx="27" cy="27" rx="11" ry="12" fill="#594b42"/><path d="M22 22q4-7 9 0l1 7-5 7-5-6z" fill="#b9aa9b"/><path d="M24 26h2M28 26h2M25 31h3" stroke="#3b302b" stroke-width="1.500"/></svg></div>
    <div class="app run"><svg width="36" height="36" viewBox="0 0 36 36"><rect width="36" height="36" rx="2" fill="#484848"/><path d="M9 12l18-6v7l-9 3 9 3v7L9 31v-7l9-3-9-3z" fill="#ff9800"/><path d="M9 12v6l18 7v-6z" fill="#e98400"/></svg></div>
    <div class="app run"><svg width="36" height="36" viewBox="0 0 36 36"><rect x="1" y="1" width="34" height="32" rx="5" fill="#00005b"/><text class="pr" x="8" y="23" textLength="20" lengthAdjust="spacingAndGlyphs">Pr</text></svg></div>
    <div class="app run"><svg width="36" height="36" viewBox="0 0 36 36"><path d="M6 18q4 3 8 1-5-10 1-15 8-5 14 2 4 8-2 13 6 4 4 10-4 7-15 6Q3 34 6 18z" fill="#f6c714"/><path d="M20 9l6-2 1 4q3 3-1 5-5 0-6-3z" fill="#e8641b"/><circle cx="20" cy="7" r="1.500"/><path d="M14 22q7 3 12-1-1 9-9 7z" fill="#dfa50b"/></svg></div>
    <div class="app run active"><svg width="36" height="36" viewBox="0 0 36 36"><path d="M0 0h36v36H0z" fill="#fbe7d8"/><path d="M0 36V20l20 5 16-3v14z" fill="#f8d7bd"/><path d="M11 4h16v6h-9v5h7v5h-7v8h-7z" fill="#bd6418"/><path d="M11 4h14l-7 6v18h-7z" fill="#e08932"/><text class="n360" x="19" y="34" textLength="12" lengthAdjust="spacingAndGlyphs">360</text></svg></div>
  </div>
  <div class="tray">
    <svg class="wx" width="33" height="38" viewBox="0 0 33 38"><path d="M7 22q-7-1-7-7 1-6 7-6 2-9 10-9 8 1 10 8 6 2 6 8-1 6-6 6z" fill="#a8d5f2"/><path d="M9 9q3-7 9-6 6 1 6 9-8-4-15-3z" fill="#dff1fc"/><path d="M16 18l3 6a3 3 0 1 1-6 0zM9 28l3 6a3 3 0 1 1-6 0zM24 22l3 6a3 3 0 1 1-6 0z" fill="#2f80d8"/></svg>
    <span class="temp" data-w="40">54°F</span>
    <svg class="sys" width="280" height="34" viewBox="1442 1033 280 34" fill="none" stroke="#111" stroke-width="1.300"><path d="M1446 1055l8-9 8 9M1485 1044h7v13h-7q-2 0-2-2v-9q0-2 2-2h8q2 0 2 2v9q0 2-2 2M1495 1049l4-3v9l-4-3M1484 1040q6-3 12 0M1484 1062q6 3 12 0"/><path d="M1519 1057q-7-5-1-10 3 0 4-1 2-6 8-4 5 2 5 7 6 5 1 8z" fill="#ddd"/><path d="M1521 1046q4-8 12-3 6 3 1 10z" fill="#666" stroke="none"/><path d="M1532 1048l8 15h-15z" fill="#fcb90a" stroke="none"/><path d="M1532 1053v5M1532 1060v1"/><path d="M1551 1042l22-4v22M1551 1042v19h14M1557 1051q1-5 7-5l3 2M1567 1044v4h-4M1567 1053q-2 5-8 4l-2-1M1557 1060v-4h4"/><circle cx="1569" cy="1058" r="5.500" fill="#2b6cb8" stroke="none"/><path d="M1592 1045h16v14h-17v-6M1609 1049v5M1588 1041v4M1593 1041v4M1586 1045h9v3q-1 5-5 5t-4-5zM1590 1053v7"/><path d="M1595 1049h3v8h-6v-3z" fill="#111"/><path d="M1624 1047h4l6-6v18l-6-6h-4zM1638 1046q3 4 0 8"/><path d="M1641 1043q5 7 0 14M1644 1040q6 10 0 20" stroke="#999"/><path d="M1664 1042h17v16h-18v-8M1672 1058v4M1666 1062h12M1659 1041h5v7h-5zM1661 1048v11"/><path d="M1716 1041q4 0 2 4l-9 13-4 3 1-5zM1710 1048q-7-2-7 4 1 5 4 4M1712 1055q5-8 9-5 2 4-4 4M1703 1052q-3 8 4 9"/></svg>
    <div class="clock"><span data-w="65">3:35 PM</span><span data-w="92">12/13/2021</span></div>
    <svg class="note" width="38" height="40" viewBox="0 0 38 40"><path d="M0 0h24v20H13v6l-6-6H0z"/><path d="M5 6h14M5 10h14M5 14h9" stroke="#fff" stroke-width="1.300"/><circle cx="23" cy="24" r="11.800" fill="#cfcfcf" stroke="#777" stroke-width="1.300"/><text class="one" x="18" y="30">1</text></svg>
    <i class="peek"></i>
  </div>
</footer>
<script src="app.js"></script>
</body>
</html>
```
FILE: styles.css
```css
* { box-sizing: border-box; }
body { margin: 0; width: 1920px; height: 1080px; overflow: hidden; display: flex; flex-direction: column; font-family: "Liberation Sans", Arial, sans-serif; font-size: 16px; color: #444; background: #fff; }
svg { flex: none; display: block; }
.defs { position: absolute; }
[data-w] { display: inline-block; white-space: nowrap; flex: none; transform-origin: 0 50%; }

.titlebar { height: 35px; display: flex; align-items: center; padding-left: 2px; flex: none; }
.app-mark { margin-bottom: 2px; }
.title { font: 17px/24px "Open Sans", sans-serif; color: #000; margin-left: 5px; margin-top: 2px; }
.winctl { margin-left: auto; margin-right: 23px; }

.tabbar { height: 48px; background: #ccc; display: flex; align-items: flex-end; flex: none; border-top: 1px solid #c4c4c4; }
.quick { width: 290px; height: 47px; display: flex; align-items: center; padding: 0 0 1px 13px; }
.q-file { margin-left: 28px; }
.q-save { margin-left: 27px; }
.q-undo { margin-left: 28px; }
.q-redo { margin-left: 20px; }
.doctab { width: 1311px; height: 42px; background: #f1f1f1; border-radius: 6px 6px 0 0; display: flex; align-items: center; font-size: 18px; padding-left: 561px; gap: 6px; }
.doctab > svg:first-child { margin-bottom: 3px; }
.doctab > span { margin-top: 2px; }
.close { margin-left: auto; margin-right: 10px; }
.newtab { width: 42px; height: 42px; margin-left: 6px; background: #bababa; border-radius: 6px 6px 0 0; display: grid; place-items: center; }
.status { display: flex; align-items: center; height: 47px; gap: 25.500px; margin-left: 17px; padding-bottom: 2px; }
.avatar { margin-left: 3.500px; }

.ribbon { height: 123px; background: #f1f1f1; border-bottom: 2px solid #ddd; display: flex; flex: none; }
.design { width: 165px; height: 92px; margin: 15px 0 0 17px; border: 2px solid #ddd; border-radius: 6px; background: none; font: bold 15px "Liberation Sans", Arial, sans-serif; color: #444; display: flex; align-items: center; justify-content: center; gap: 8px; padding: 0; }
.tools { margin-left: 8px; }
.modes { height: 37px; display: flex; align-items: center; padding-left: 17px; }
.mode { line-height: 34px; margin-bottom: 2px; }
.mode.on { width: 85px; height: 37px; margin: 0; padding-left: 20px; color: #0d9ade; border-bottom: 5px solid #0d9ade; }
.m2 { margin-left: 50px; }
.m3 { margin-left: 68px; }
.m4 { margin-left: 68px; }
.m5 { margin-left: 68px; }
.groups { display: flex; padding-top: 3px; }
.group { height: 80px; border-right: 2px solid #ddd; display: flex; flex-direction: column; align-items: center; justify-content: space-between; }
.icons { display: flex; gap: 14.500px; margin-left: 2px; }
.icons svg { width: 50px; height: 50px; }
.glabel { display: flex; align-items: center; gap: 4px; height: 22px; }
.glabel svg { margin-bottom: 4px; }
.g-create { width: 402px; }
.g-modify { width: 403px; }
.g-modify .icons { margin-left: 5px; }
.g-modify .glabel, .g-create .glabel { margin-right: 3px; }
.g-assemble { width: 146px; }
.g-construct { width: 148px; }
.g-inspect { width: 119px; }
.g-insert { width: 103px; }
.g-insert .glabel { margin-left: 5px; }
.g-select { width: 114px; border: 0; }
.g-select .glabel { margin-right: 2px; }

.viewport { height: 740px; flex: none; display: grid; }
.scene, .panels { grid-area: 1 / 1; }
.axis { font: bold 13px "Liberation Sans", Arial, sans-serif; }
.face { font: bold 9px "Liberation Sans", Arial, sans-serif; fill: #888; }
.panels { display: flex; flex-direction: column; justify-content: space-between; padding: 6px 0 6px 6px; z-index: 1; }
.panel-head { width: 450px; height: 38px; background: #f1f1f1; border: 1px solid #c4c4c4; border-bottom-width: 2px; color: #666; display: flex; align-items: center; padding-left: 6px; }
.rew { margin-right: 15px; }
.dot { margin-left: auto; margin-right: 10px; }
.grip { width: 5px; height: 17px; border-left: 1.500px solid #999; border-right: 1.500px solid #aaa; margin-right: 2px; }
.comments { border-top: 0; padding-left: 37px; }
.tree { display: flex; flex-direction: column; gap: 6px; padding-top: 7px; }
.row { display: flex; align-items: center; height: 30px; padding-left: 53px; }
.root { padding-left: 25px; }
.cell { display: flex; align-items: center; height: 30px; background: #f1f1f1; padding-left: 4px; margin-left: 12px; }
.cell span { margin: 2px 0 0 20px; }
.root .cell { width: 282px; margin-left: 11px; }
.sel { width: 208px; height: 24px; margin: 0 5px 0 9px; padding-left: 4px; background: #989898; color: #fff; display: flex; align-items: center; gap: 21px; }
.sel b { margin-top: 1px; }
.f2 { margin-left: 13px; }
.w1 { width: 201px; } .w2 { width: 165px; } .w3 { width: 142px; } .w4 { width: 154px; } .w5 { width: 172px; } .w6 { width: 197px; }
.bottom { display: flex; align-items: flex-end; }
.navbar { margin: 0 0 1px 326px; width: 356px; height: 36px; background: #f1f1f1; display: flex; align-items: center; }
.orbit { width: 49px; height: 36px; background: #0b96d8; display: flex; align-items: center; gap: 7px; padding-left: 5px; margin-right: 5px; }
.dn { color: #fff; }
.n2 { margin-left: 15px; } .n3 { margin-left: 14px; } .n4 { margin-left: 14px; } .n5 { margin-left: 9px; } .n6 { margin-left: 10px; } .n7 { margin-left: 11px; }

.timeline { height: 74px; flex: none; background: #f1f1f1; border-top: 3px solid #ccc; }
.thumb { width: 292px; height: 8px; margin-left: 6px; background: #ccc; border-radius: 0 0 6px 6px; }
.tl-body { display: flex; }
.play { margin: 22px 0 0 16px; }
.track { margin-left: 30px; width: 1634px; height: 53px; display: flex; overflow: hidden; padding-top: 8px; }
.feat { width: 36.030px; flex: none; }
.feat .ico { height: 36px; padding: 6px 0 0 .7px; }
.feat .tick { height: 9px; border-bottom: 3px solid #c8c8c8; display: flex; padding-left: 12.500px; }
.feat .tick::before { content: ""; width: 3px; height: 8px; background: #c8c8c8; }
.feat:first-child .tick { margin-left: 13px; padding-left: 0; }
.feat.now .ico { background: #e5e81f; border-radius: 5px 0 0 5px; margin-left: -6px; padding-left: 6px; }
.tl-gear { margin: 22px 0 0 24px; }

.taskbar { height: 60px; flex: none; background: #d5d5d5; display: flex; align-items: center; color: #111; font-family: "Open Sans", sans-serif; }
.start { margin-left: 24px; }
.search { width: 515px; height: 59px; margin: 0 0 0 24px; background: #fff; border: 2px solid #c8c8c8; display: flex; align-items: center; padding-left: 15px; gap: 18px; font-size: 22px; line-height: 30px; }
.search span { margin-top: 1px; }
.cortana { margin-left: 25px; }
.tview { margin-left: 48px; }
.apps { display: flex; margin-left: 33px; height: 60px; gap: 14px; }
.app { width: 55px; height: 60px; display: grid; place-items: center; border-bottom: 3px solid transparent; padding-top: 2px; }
.run { border-bottom-color: #6b68d6; }
.active { width: 67px; background: #f0f0f0; margin-left: -6px; }
.tray { display: flex; align-items: center; height: 60px; margin-left: 45px; flex: 1; }
.temp { margin-left: 14px; font-size: 20px; }
.sys { margin-left: 24px; }
.clock { display: flex; flex-direction: column; align-items: center; width: 94px; margin-left: 19px; font-size: 17px; line-height: 28px; }
.note { margin: 4px 0 0 23px; }
.peek { width: 2px; height: 60px; background: #aaa; margin-left: auto; margin-right: 6px; }
.pr { font: bold 19px "Open Sans", sans-serif; fill: #9999ff; }
.n360 { font: bold 7px "Open Sans", sans-serif; fill: #d87a2a; }
.one { font: 17px "Open Sans", sans-serif; }
```
FILE: app.js
```js
// Features of the design history, in order.
const S = 'sketch', P = 'plane', D = 'offset';
const features = [S, 'extrude', P, 'ball', P, S, 'hole', S, D, P, P, D, P, D, P, D, P,
  ...Array(9).fill(S), D, D, D, D, ...Array(9).fill(S), P, S, P, S, 'sweep', 'sweep', 'sweep'];
document.getElementById('track').innerHTML = features.map((f, i) =>
  `<div class="feat${i === features.length - 1 ? ' now' : ''}"><div class="ico"><svg width="25" height="25"><use href="#${f}"/></svg></div><div class="tick"></div></div>`).join('');

for (const el of document.querySelectorAll('[data-w]')) {
  const w = Number(el.dataset.w), natural = el.offsetWidth;
  el.style.transform = `scaleX(${w / natural})`;
  el.style.marginRight = `${w - natural}px`;
}
```
